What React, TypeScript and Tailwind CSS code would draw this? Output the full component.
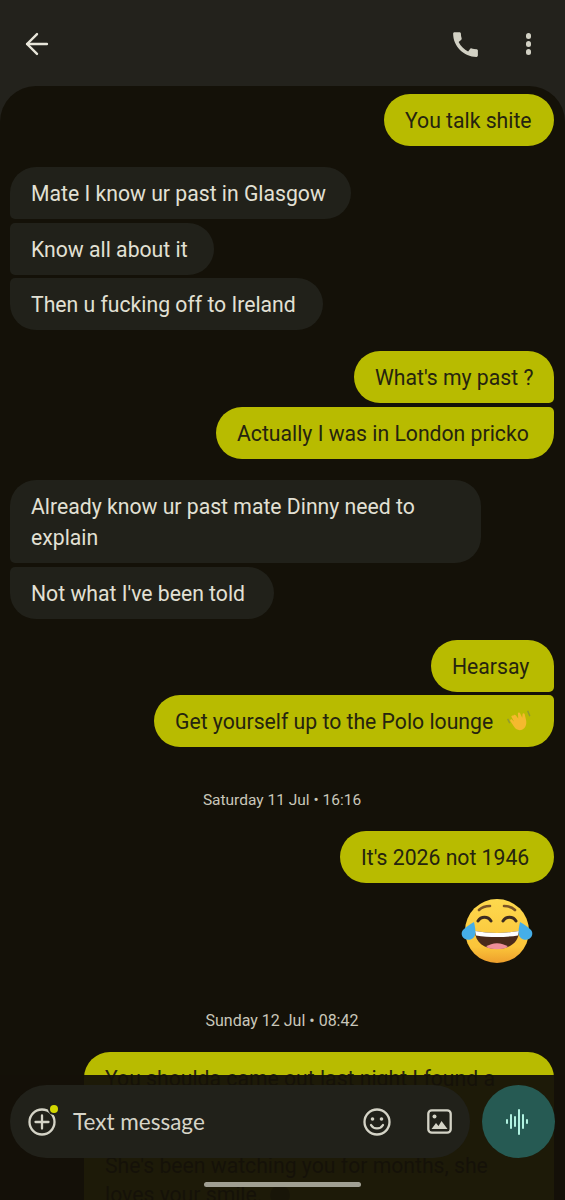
import React from "react";
import { ArrowLeft } from "lucide-react";

const font = "font-['Roboto',sans-serif]";

function Out({ className, children }: { className: string; children: React.ReactNode }) {
  return (
    <div className="flex justify-end">
      <div className={`whitespace-nowrap bg-[#b8bb00] text-[#25240f] pl-[21px] py-[10.5px] text-[21.2px] leading-[31px] ${className}`}>
        {children}
      </div>
    </div>
  );
}

function In({ className, children }: { className: string; children: React.ReactNode }) {
  return (
    <div className="flex justify-start">
      <div className={`bg-[#21211a] text-[#e2e0d4] pl-[21px] py-[10.5px] text-[21.2px] leading-[31px] ${className}`}>
        {children}
      </div>
    </div>
  );
}

function Wave() {
  return (
    <svg width="26" height="26" viewBox="0 0 24 24">
      <path d="M3.500 14 1.500 10 M20 2.500 22 7.500" stroke="#8f9a30" strokeWidth="1.300" fill="none" />
      <path
        d="M7 6.500c.6-.6 1.500-.4 2 .2l2.300 3-.3-4.700c0-.8 1.600-1.200 2-.2l2 4.200.3-3.500c.1-.9 1.600-1 1.900 0l1.300 5.500c.9 4-.6 7.700-3.700 9-2.800 1.100-5.600 0-7.300-2.600l-3.400-5.200c-.8-1.300.7-2.300 1.600-1.400l1.800 1.800-2.400-4.300c-.5-.9.8-1.900 1.600-1z"
        fill="#f5b92e"
      />
    </svg>
  );
}

function LaughEmoji() {
  return (
    <svg width="74" height="68" viewBox="0 0 74 68">
      <defs>
        <linearGradient id="face" x1="0" y1="0" x2="0" y2="1">
          <stop offset="0" stopColor="#fdd94e" />
          <stop offset="0.75" stopColor="#fbc53a" />
          <stop offset="1" stopColor="#ee9f2c" />
        </linearGradient>
      </defs>
      <circle cx="37" cy="34" r="32" fill="url(#face)" />
      <path d="M19 13c3-3 7-4 11-4M44 9c4 0 8 1 11 4" stroke="#7a5426" strokeWidth="2.600" strokeLinecap="round" fill="none" />
      <path d="M18 24c3-5 10-5 13 0M43 24c3-5 10-5 13 0" stroke="#3d2c20" strokeWidth="3" strokeLinecap="round" fill="none" />
      <path d="M15 34c14 2.500 30 2.500 44 0 0 11-9 18-22 18S15 45 15 34z" fill="#4a2a1a" />
      <path d="M15 34c14 2.500 30 2.500 44 0l-1 4.500c-13 2-29 2-42 0z" fill="#ffffff" />
      <path d="M26 50c6-5 16-5 22 0-6 3-16 3-22 0z" fill="#ef8f98" />
      <path d="M14 25c1 5 2 9 1 13-1 4-6 6-10 4-4-2-4-7-2-9 3-3 7-6 11-8z" fill="#45aee8" />
      <path d="M60 25c-1 5-2 9-1 13 1 4 6 6 10 4 4-2 4-7 2-9-3-3-7-6-11-8z" fill="#45aee8" />
    </svg>
  );
}

function HeartEyes() {
  return (
    <svg width="20" height="20" viewBox="0 0 20 20" className="ml-[8px] inline-block">
      <circle cx="10" cy="10" r="10" fill="#6b6a10" />
    </svg>
  );
}

export default function App() {
  return (
    <div className={`relative h-[1200px] w-[565px] overflow-hidden bg-[#23221c] ${font}`}>
      <header className="flex h-[86px] items-center pt-[2px] pl-[20px] pr-[34px]">
        <ArrowLeft size={34} strokeWidth={1.700} color="#e8e6da" />
        <div className="ml-auto flex items-center gap-[44px]">
          <svg width="33" height="33" viewBox="0 0 24 24" fill="#d2d1c4">
            <path d="M20.010 15.380c-1.230 0-2.420-.2-3.530-.56-.35-.12-.74-.03-1.010.24l-1.570 1.970c-2.830-1.350-5.480-3.900-6.890-6.830l1.950-1.660c.27-.28.35-.67.24-1.020-.37-1.110-.56-2.300-.56-3.530 0-.54-.45-.99-.99-.99H4.190C3.650 3 3 3.240 3 3.990 3 13.280 10.730 21 20.010 21c.71 0 .99-.63.99-1.180v-3.450c0-.54-.45-.99-.99-.99z" />
          </svg>
          <div className="flex flex-col gap-[2.500px]">
            <span className="h-[5.500px] w-[5.500px] rounded-full bg-[#d2d1c4]" />
            <span className="h-[5.500px] w-[5.500px] rounded-full bg-[#d2d1c4]" />
            <span className="h-[5.500px] w-[5.500px] rounded-full bg-[#d2d1c4]" />
          </div>
        </div>
      </header>

      <main className="h-[1114px] rounded-t-[36px] bg-[#141108] pt-[8px] pl-[10px] pr-[11px]">
        <Out className="w-[170px] rounded-[26px]">You talk shite</Out>

        <div className="mt-[21px]">
          <In className="w-[341px] rounded-[26px] rounded-bl-[5px]">Mate I know ur past in Glasgow</In>
          <div className="mt-[4px]">
            <In className="w-[204px] rounded-r-[26px] rounded-l-[5px]">Know all about it</In>
          </div>
          <div className="mt-[3px]">
            <In className="w-[313px] rounded-[26px] rounded-tl-[5px]">Then u fucking off to Ireland</In>
          </div>
        </div>

        <div className="mt-[21px]">
          <Out className="w-[200px] rounded-[26px] rounded-br-[5px]">What's my past ?</Out>
          <div className="mt-[4px]">
            <Out className="w-[338px] rounded-[26px] rounded-tr-[5px]">Actually I was in London pricko</Out>
          </div>
        </div>

        <div className="mt-[21px]">
          <In className="w-[471px] pr-[21px] rounded-[26px] rounded-bl-[5px]">Already know ur past mate Dinny need to explain</In>
          <div className="mt-[4px]">
            <In className="w-[264px] rounded-[26px] rounded-tl-[5px]">Not what I've been told</In>
          </div>
        </div>

        <div className="mt-[21px]">
          <Out className="w-[123px] rounded-[26px] rounded-br-[5px]">Hearsay</Out>
          <div className="mt-[3px]">
            <Out className="flex w-[400px] items-center rounded-[26px] rounded-tr-[5px]">
              <span>Get yourself up to the Polo lounge</span>
              <span className="ml-[13px] flex"><Wave /></span>
            </Out>
          </div>
        </div>

        <div className="mt-[43px] h-[20px] text-center text-[15.500px] leading-[20px] text-[#c9c7ba]">
          Saturday 11 Jul • 16:16
        </div>

        <div className="mt-[21px]">
          <Out className="w-[214px] rounded-[26px]">It's 2026 not 1946</Out>
        </div>

        <div className="mt-[14px] flex justify-end pr-[20px]">
          <LaughEmoji />
        </div>

        <div className="mt-[46px] h-[20px] text-center text-[16px] leading-[20px] text-[#c9c7ba]">
          Sunday 12 Jul • 08:42
        </div>

        <div className="mt-[21px] flex justify-end">
          <div className="w-[470px] rounded-t-[26px] bg-[#b8bb00] px-[21px] pt-[12px] pb-[20px] text-[21.200px] leading-[29px] text-[#25240f]">
            <p>You shoulda came out last night I found a</p>
            <p>&nbsp;</p>
            <p>&nbsp;</p>
            <p>She's been watching you for months, she</p>
            <p className="flex items-center">loves your smile.<HeartEyes /></p>
          </div>
        </div>
      </main>

      {/* dim layer behind the composer */}
      <div className="absolute inset-x-0 top-[1075px] bottom-0 bg-[#141108]/95" />

      <div className="absolute left-[10px] top-[1085px] flex h-[73px] w-[460px] items-center rounded-full bg-[#21211a] pl-[18px]">
        <div className="relative h-[28px] w-[28px]">
          <svg width="28" height="28" viewBox="0 0 28 28" fill="none" stroke="#d4d3c6" strokeWidth="2.300">
            <circle cx="14" cy="14" r="12.500" />
            <path d="M14 7.500v13M7.500 14h13" strokeLinecap="round" />
          </svg>
          <span className="absolute -right-[1.500px] -top-[2.500px] h-[8px] w-[8px] rounded-full bg-[#d3d800] ring-2 ring-[#21211a]" />
        </div>
        <span className="ml-[17px] font-['Lato',sans-serif] text-[22.500px] text-[#d6d4c8]">Text message</span>
        <svg className="ml-auto" width="28" height="28" viewBox="0 0 28 28" fill="none" stroke="#d4d3c6" strokeWidth="2.300">
          <circle cx="14" cy="14" r="12.500" />
          <circle cx="9.500" cy="11" r="1.800" fill="#d4d3c6" stroke="none" />
          <circle cx="18.500" cy="11" r="1.800" fill="#d4d3c6" stroke="none" />
          <path d="M8 17c2.500 4.500 9.500 4.500 12 0" strokeLinecap="round" />
        </svg>
        <svg className="ml-[36px] mr-[18px]" width="25" height="25" viewBox="0 0 25 25" fill="none">
          <rect x="1.300" y="1.300" width="22.400" height="22.400" rx="3.500" stroke="#d4d3c6" strokeWidth="2.300" />
          <circle cx="7.500" cy="7.500" r="2" fill="#d4d3c6" />
          <path d="M4.500 20l4.500-6 2.500 3 3-5 6 8z" fill="#d4d3c6" />
        </svg>
      </div>

      <div className="absolute left-[482px] top-[1085px] flex h-[73px] w-[73px] items-center justify-center rounded-full bg-[#265a53] pr-[3px]">
        <div className="flex items-center gap-[1.500px]">
          <span className="h-[5px] w-[2.500px] rounded-full bg-[#b0f2e0]" />
          <span className="h-[15px] w-[2.500px] rounded-full bg-[#b0f2e0]" />
          <span className="h-[11px] w-[2.500px] rounded-full bg-[#b0f2e0]" />
          <span className="h-[26px] w-[2.500px] rounded-full bg-[#b0f2e0]" />
          <span className="h-[15px] w-[2.500px] rounded-full bg-[#b0f2e0]" />
          <span className="h-[5px] w-[2.500px] rounded-full bg-[#b0f2e0]" />
        </div>
      </div>

      <div className="absolute left-[204px] top-[1182px] h-[5px] w-[157px] rounded-full bg-[#a09f93]" />
    </div>
  );
}
